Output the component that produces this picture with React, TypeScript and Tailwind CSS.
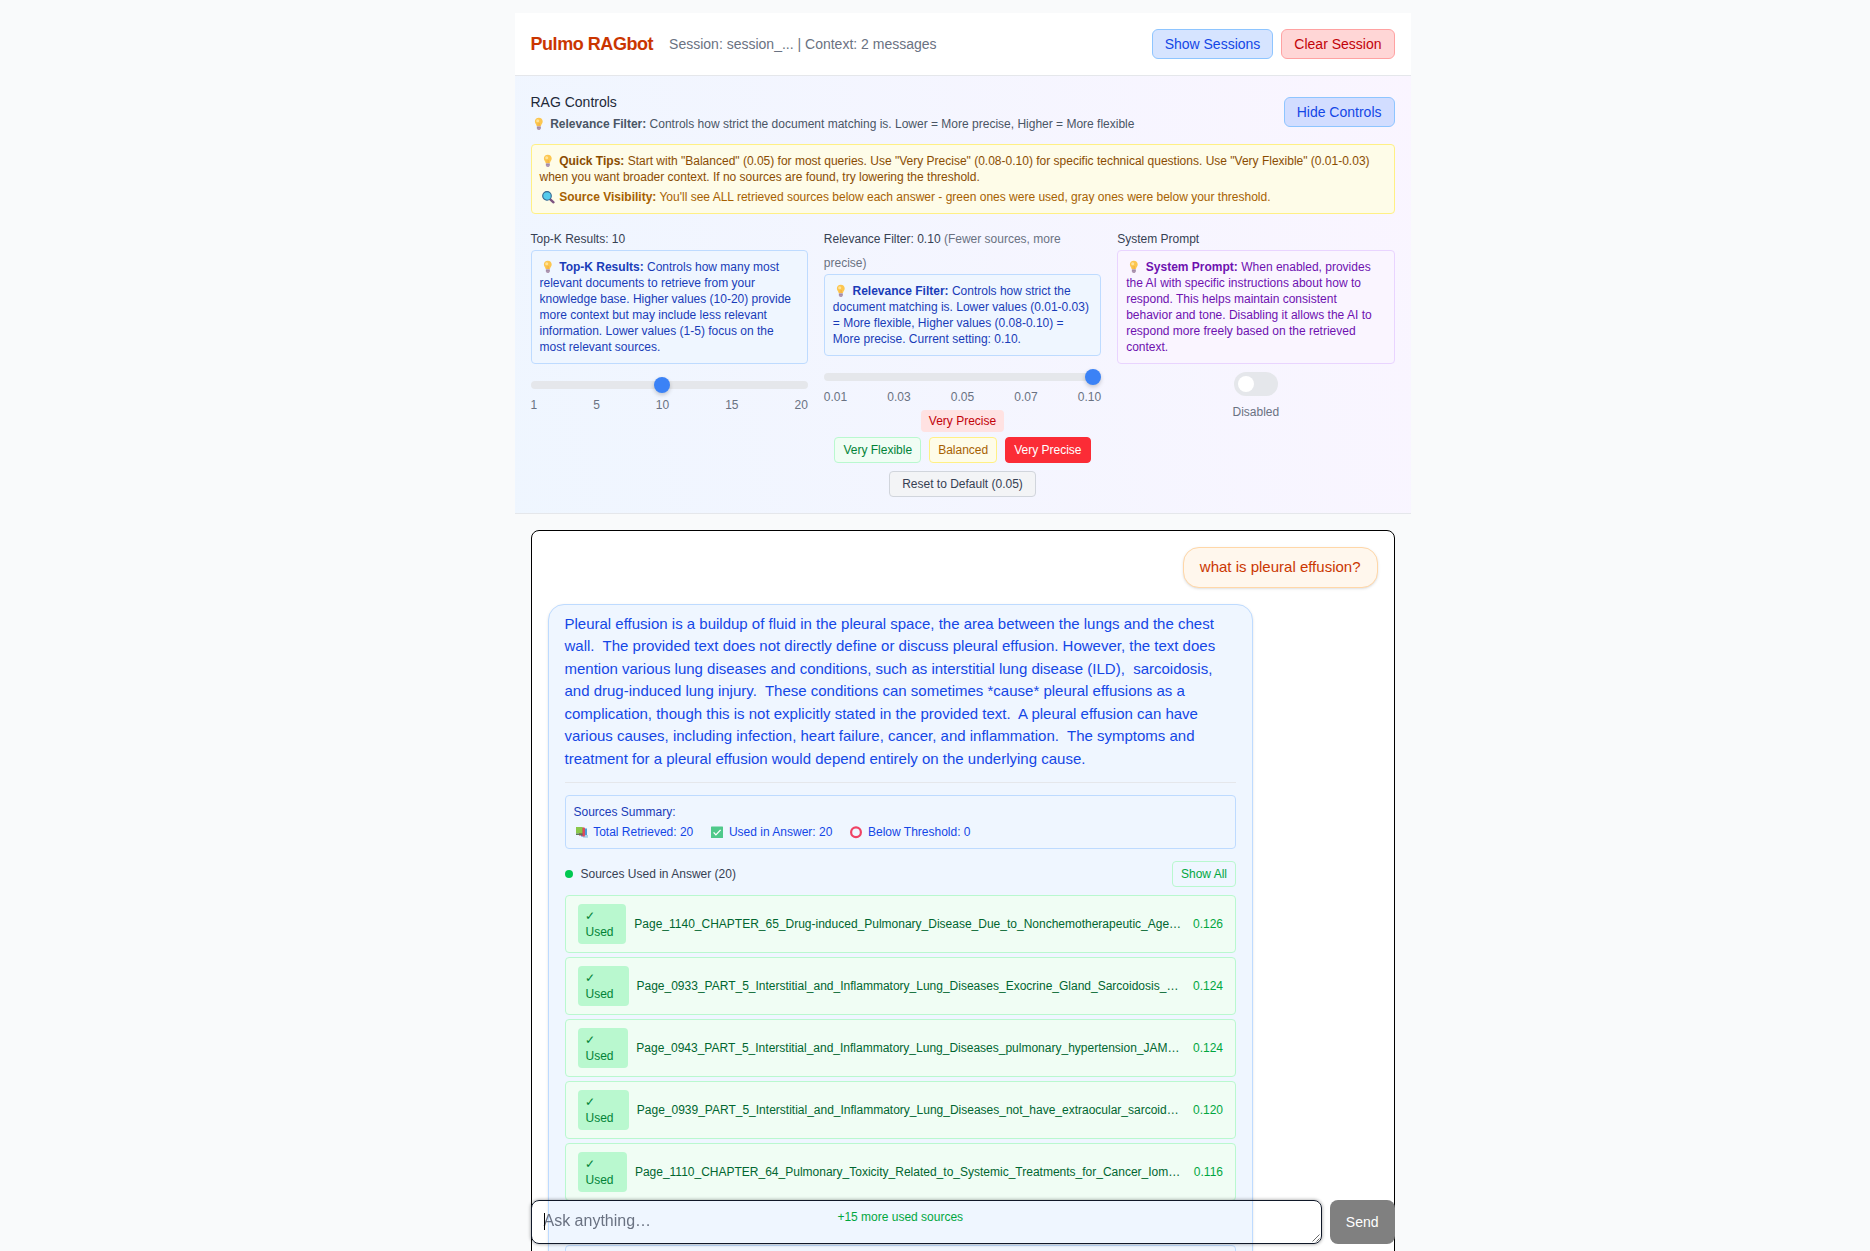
import React from "react";

function Emoji({ children }: { children: React.ReactNode }) {
  return (
    <svg viewBox="0 0 16 14" className="mr-[3.700px] inline-block h-[14px] w-4 align-[-3px]">
      {children}
    </svg>
  );
}

function Bulb() {
  return (
    <Emoji>
      <path d="M7.800 .8C5.400 .8 3.900 2.500 3.900 4.600c0 1.800 1.400 2.600 1.800 4.700h4.200c.4-2.100 1.800-2.900 1.800-4.700C11.700 2.500 10.200 .8 7.800 .8Z" fill="#fcc64f" />
      <circle cx="6.700" cy="3.700" r="1.500" fill="#ffe39a" />
      <path d="M7.200 6v3.200M8.500 6v3.200" stroke="#f0a63a" strokeWidth=".5" />
      <path d="M5.900 9.300h3.900v2.300l-.9 1.500H6.800l-.9-1.500Z" fill="#b39bb5" />
      <path d="M5.900 10.700h3.900" stroke="#8d7593" strokeWidth=".5" />
    </Emoji>
  );
}

function Magnifier() {
  return (
    <Emoji>
      <path d="M9.700 8.800l3.800 3.500" stroke="#7d5480" strokeWidth="2.400" strokeLinecap="round" />
      <circle cx="7" cy="5.900" r="4.300" fill="#55cbec" stroke="#35668f" strokeWidth="1.100" />
    </Emoji>
  );
}

function Books() {
  return (
    <Emoji>
      <path d="M7 3.500h6v8H7z" fill="#4b9bd8" />
      <path d="M10 10h4v2.800H9z" fill="#a9cfe8" />
      <path d="M5 2.500h5.500v8H5z" fill="#c02f4e" />
      <path d="M8.500 3h2.300v8.500H8.500z" fill="#e0485c" />
      <path d="M2 2h6.500v6.500H2z" fill="#8ac84a" />
      <path d="M2 8.500h6.500V10H2z" fill="#5a7a58" />
    </Emoji>
  );
}

function Check() {
  return (
    <Emoji>
      <rect x="2" y="1.500" width="12" height="11.500" rx=".6" fill="#4fc98a" />
      <path d="M4.600 7.400l2.300 2.500 4.700-5" fill="none" stroke="#fff" strokeWidth="1.300" />
    </Emoji>
  );
}

function Ring() {
  return (
    <Emoji>
      <circle cx="8" cy="7.300" r="4.900" fill="none" stroke="#ef4264" strokeWidth="2.200" />
    </Emoji>
  );
}

function Slider({ percent, ticks }: { percent: number; ticks: string[] }) {
  return (
    <>
      <div className="relative mt-[17px] h-2 rounded-lg bg-gray-200">
        <div className="absolute inset-y-0 right-4 left-0">
          <div
            className="absolute -top-1 size-4 rounded-full bg-[#3b82f6] shadow-[0_2px_4px_rgba(0,0,0,0.2)]"
            style={{ left: `${percent}%` }}
          />
        </div>
      </div>
      <div className="mt-2 flex justify-between text-xs text-gray-500">
        {ticks.map((t) => (
          <span key={t}>{t}</span>
        ))}
      </div>
    </>
  );
}

const sources = [
  { name: "Page_1140_CHAPTER_65_Drug-induced_Pulmonary_Disease_Due_to_Nonchemotherapeutic_Age…", score: "0.126", badge: "w-[48.800px]" },
  { name: "Page_0933_PART_5_Interstitial_and_Inflammatory_Lung_Diseases_Exocrine_Gland_Sarcoidosis_…", score: "0.124", badge: "w-[51px]" },
  { name: "Page_0943_PART_5_Interstitial_and_Inflammatory_Lung_Diseases_pulmonary_hypertension_JAM…", score: "0.124", badge: "w-[50.800px]" },
  { name: "Page_0939_PART_5_Interstitial_and_Inflammatory_Lung_Diseases_not_have_extraocular_sarcoid…", score: "0.120", badge: "w-[51.300px]" },
  { name: "Page_1110_CHAPTER_64_Pulmonary_Toxicity_Related_to_Systemic_Treatments_for_Cancer_Iom…", score: "0.116", badge: "w-[49.400px]" },
];

const answer =
  "Pleural effusion is a buildup of fluid in the pleural space, the area between the lungs and the chest wall.  The provided text does not directly define or discuss pleural effusion. However, the text does mention various lung diseases and conditions, such as interstitial lung disease (ILD),  sarcoidosis, and drug-induced lung injury.  These conditions can sometimes *cause* pleural effusions as a complication, though this is not explicitly stated in the provided text.  A pleural effusion can have various causes, including infection, heart failure, cancer, and inflammation.  The symptoms and treatment for a pleural effusion would depend entirely on the underlying cause.";

function Header() {
  return (
    <header className="flex items-center justify-between border-b border-gray-200 bg-white p-4">
      <div className="flex items-center gap-4">
        <h1 className="text-lg font-bold tracking-tight text-orange-700">Pulmo RAGbot</h1>
        <span className="text-sm text-gray-500">Session: session_... | Context: 2 messages</span>
      </div>
      <div className="flex gap-2">
        <button className="rounded-md border border-blue-300 bg-[#d6e4ff] px-3 py-1 text-sm text-blue-700">Show Sessions</button>
        <button className="rounded-md border border-red-300 bg-[#ffd6d6] px-3 py-1 text-sm text-red-700">Clear Session</button>
      </div>
    </header>
  );
}

function Controls() {
  return (
    <section className="h-[438px] border-b border-gray-200 bg-linear-75 from-blue-50 to-purple-50 p-4">
      <div className="mb-3 flex items-center justify-between">
        <div>
          <h2 className="text-sm text-gray-800">RAG Controls</h2>
          <p className="mt-1 text-xs text-gray-600">
            <Bulb />
            <strong>Relevance Filter:</strong> Controls how strict the document matching is. Lower = More precise, Higher = More flexible
          </p>
        </div>
        <button className="rounded-md border border-blue-300 bg-[#d2ddff] px-3 py-1 text-sm text-blue-700">Hide Controls</button>
      </div>

      <div className="mb-3 rounded border border-yellow-200 bg-yellow-50 p-2 text-xs">
        <p className="text-yellow-800">
          <Bulb />
          <strong>Quick Tips:</strong> Start with "Balanced" (0.05) for most queries. Use "Very Precise" (0.08-0.10) for specific technical
          questions. Use "Very Flexible" (0.01-0.03) when you want broader context. If no sources are found, try lowering the threshold.
        </p>
        <p className="mt-1 text-yellow-700">
          <Magnifier />
          <strong>Source Visibility:</strong> You'll see ALL retrieved sources below each answer - green ones were used, gray ones were
          below your threshold.
        </p>
      </div>

      <div className="grid grid-cols-3 gap-4">
        <div>
          <div><span className="text-xs text-gray-700">Top-K Results: 10</span></div>
          <p className="rounded border border-blue-200 bg-blue-50 p-2 text-xs text-blue-800">
            <Bulb />
            <strong>Top-K Results:</strong> Controls how many most relevant documents to retrieve from your knowledge base. Higher values
            (10-20) provide more context but may include less relevant information. Lower values (1-5) focus on the most relevant sources.
          </p>
          <Slider percent={47.4} ticks={["1", "5", "10", "15", "20"]} />
        </div>

        <div>
          <div>
            <span className="text-xs text-gray-700">
              Relevance Filter: 0.10 <span className="text-gray-500">(Fewer sources, more precise)</span>
            </span>
          </div>
          <p className="rounded border border-blue-200 bg-blue-50 p-2 text-xs text-blue-800">
            <Bulb />
            <strong>Relevance Filter:</strong> Controls how strict the document matching is. Lower values (0.01-0.03) = More flexible,
            Higher values (0.08-0.10) = More precise. Current setting: 0.10.
          </p>
          <Slider percent={100} ticks={["0.01", "0.03", "0.05", "0.07", "0.10"]} />
          <div className="mt-[3px] text-center">
            <span className="rounded bg-red-100 px-2 py-1 text-xs text-red-700">Very Precise</span>
          </div>
          <div className="mt-[5px] flex justify-center gap-2 text-xs">
            <button className="rounded border border-green-200 bg-green-50 px-2 py-1 text-green-700">Very Flexible</button>
            <button className="rounded border border-yellow-200 bg-yellow-50 px-2 py-1 text-yellow-700">Balanced</button>
            <button className="rounded border border-red-500 bg-red-500 px-2 py-1 text-white">Very Precise</button>
          </div>
          <div className="mt-2 flex justify-center">
            <button className="rounded border border-gray-300 bg-gray-100 px-3 py-1 text-xs text-gray-700">Reset to Default (0.05)</button>
          </div>
        </div>

        <div>
          <div><span className="text-xs text-gray-700">System Prompt</span></div>
          <p className="rounded border border-purple-200 bg-purple-50 p-2 text-xs text-purple-800">
            <Bulb />
            <strong>System Prompt:</strong> When enabled, provides the AI with specific instructions about how to respond. This helps
            maintain consistent behavior and tone. Disabling it allows the AI to respond more freely based on the retrieved context.
          </p>
          <div className="mt-2 flex flex-col items-center gap-2">
            <div className="flex h-6 w-11 items-center rounded-full bg-gray-200 px-1">
              <span className="size-4 rounded-full bg-white" />
            </div>
            <span className="text-xs text-gray-500">Disabled</span>
          </div>
        </div>
      </div>
    </section>
  );
}

function Answer() {
  return (
    <div className="mt-4 w-[85%] rounded-2xl border border-blue-200 bg-blue-50 px-4 py-2 pb-10 shadow-sm">
      <p className="text-[15px] leading-[1.5] whitespace-pre-wrap text-blue-700">{answer}</p>
      <div className="mt-3 border-t border-gray-200 pt-3 text-xs">
        <div className="rounded border border-blue-200 p-2">
          <p className="text-blue-800">Sources Summary:</p>
          <div className="mt-1 flex gap-4 text-blue-700">
            <span><Books />Total Retrieved: 20</span>
            <span><Check />Used in Answer: 20</span>
            <span><Ring />Below Threshold: 0</span>
          </div>
        </div>
        <div className="mt-3 flex items-center justify-between">
          <div className="flex items-center gap-2 text-gray-700">
            <span className="size-2 rounded-full bg-green-500" />
            Sources Used in Answer (20)
          </div>
          <button className="rounded border border-green-200 px-2 py-1 text-green-600">Show All</button>
        </div>
        <ul className="mt-2 space-y-1">
          {sources.map((s) => (
            <li key={s.name} className="flex items-center rounded border border-green-200 bg-green-50 px-3 py-2">
              <span className={`${s.badge} mr-2 shrink-0 rounded bg-green-200 px-2 py-1 text-green-700`}>
                <span className="-ml-px">✓</span>
                <br />
                Used
              </span>
              <span className="min-w-0 flex-1 whitespace-nowrap text-green-800">{s.name}</span>
              <span className="text-green-600">{s.score}</span>
            </li>
          ))}
        </ul>
        <p className="mt-2 text-center text-green-600">+15 more used sources</p>
        <div className="mt-5 h-14 rounded border border-blue-200" />
      </div>
    </div>
  );
}

function Composer() {
  return (
    <div className="fixed inset-x-0 bottom-[7px] pl-[55px]">
      <div className="mx-auto flex w-4xl gap-2 px-4">
        <div className="relative flex h-11 flex-1 items-center rounded-lg border border-gray-900 px-3 text-base text-gray-500 shadow-[0_0_3px_1px_rgba(0,0,0,0.25)]">
          <span className="absolute top-3 left-3 h-[17px] w-px bg-black" />
          <span className="-mt-0.5">Ask anything…</span>
          <svg viewBox="0 0 8 8" className="absolute right-px bottom-px size-2">
            <path d="M.5 7.500l7-7M4.500 7.500l3-3" stroke="#444" strokeWidth=".8" />
          </svg>
        </div>
        <button className="h-11 rounded-lg bg-[#808080] px-4 text-sm text-white">Send</button>
      </div>
    </div>
  );
}

export default function App() {
  return (
    <div className="h-[1251px] overflow-hidden bg-gray-50 pt-[13px] pl-[55px] font-['Liberation_Sans',Arial,sans-serif]">
      <div className="mx-auto w-4xl">
        <Header />
        <Controls />
        <main className="m-4 h-[800px] rounded-lg border border-black bg-white p-4">
          <div className="flex justify-end">
            <div className="rounded-2xl border border-orange-200 bg-orange-50 px-4 py-2 text-[15px] leading-[1.5] text-orange-700 shadow-sm">
              what is pleural effusion?
            </div>
          </div>
          <Answer />
        </main>
      </div>
      <Composer />
    </div>
  );
}
